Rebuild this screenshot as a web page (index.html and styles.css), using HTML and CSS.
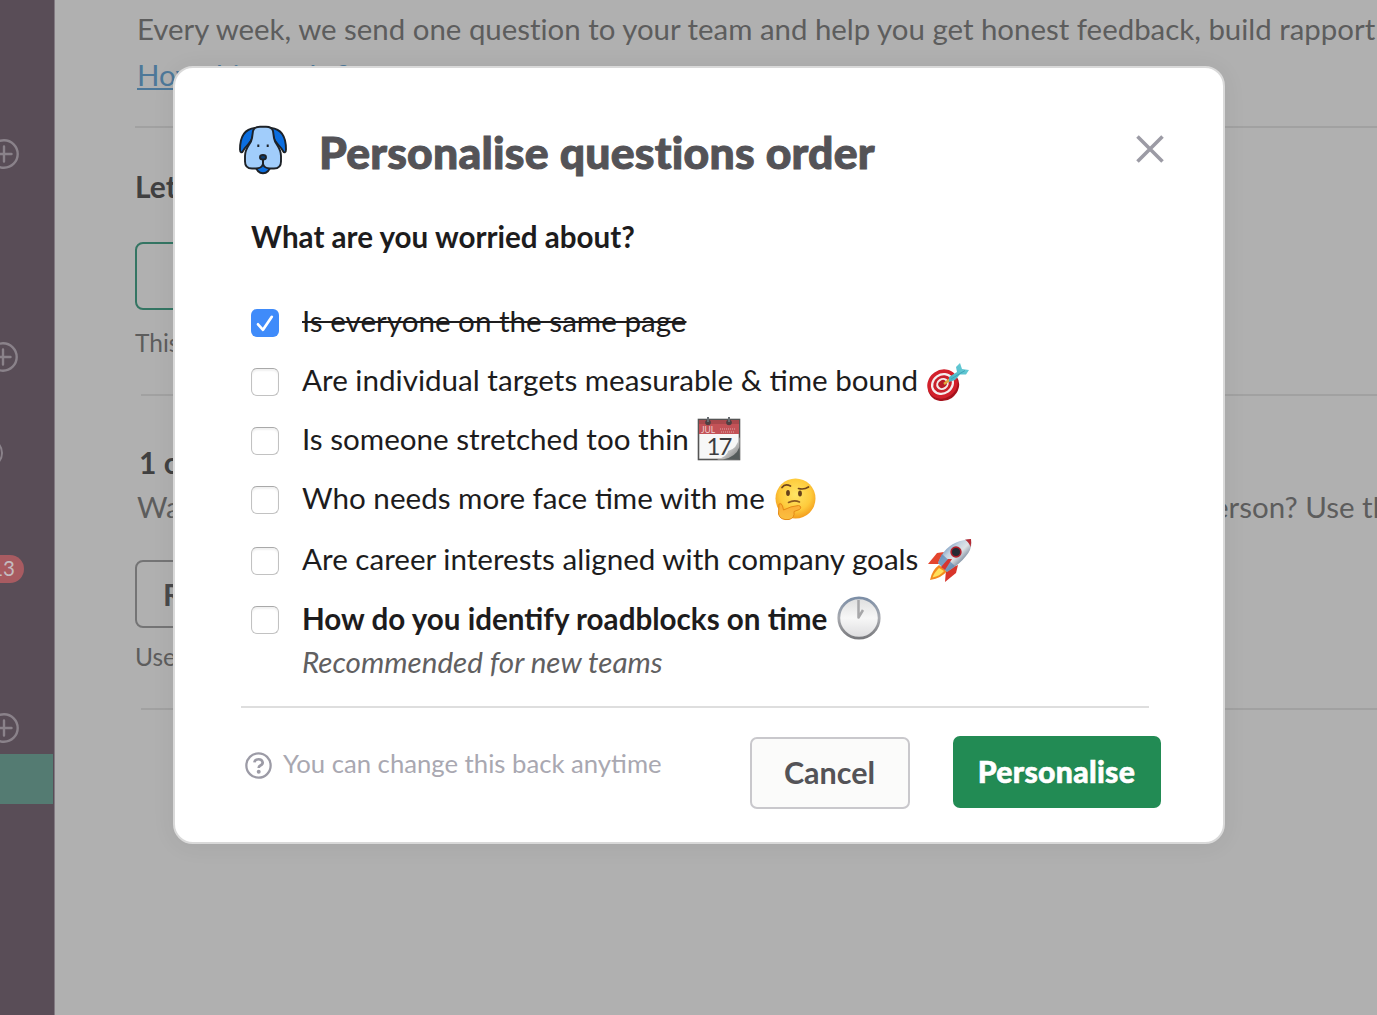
FILE: index.html
```html
<!DOCTYPE html>
<html lang="en">
<head>
<meta charset="utf-8">
<title>Personalise questions order</title>
<link rel="stylesheet" href="styles.css">
</head>
<body>
<svg width="0" height="0" class="defs" aria-hidden="true">
  <defs>
    <symbol id="plus" viewBox="0 0 30 30"><circle cx="15" cy="15" r="13.7" fill="none" stroke="currentColor" stroke-width="2.4"/><path d="M15 7.5v15M7.5 15h15" stroke="currentColor" stroke-width="2.4" stroke-linecap="round"/></symbol>
    <linearGradient id="dart" x1="0" y1="1" x2="1" y2="0"><stop offset="0" stop-color="#43b3c6"/><stop offset="1" stop-color="#6fd0d8"/></linearGradient>
    <radialGradient id="face" cx=".5" cy=".4" r=".6"><stop offset="0" stop-color="#ffe565"/><stop offset=".65" stop-color="#fecb3c"/><stop offset="1" stop-color="#f39c1d"/></radialGradient>
    <linearGradient id="hand" x1="0" y1="0" x2="0" y2="1"><stop offset="0" stop-color="#fbab35"/><stop offset="1" stop-color="#fbc040"/></linearGradient>
    <linearGradient id="hull" x1=".2" y1=".2" x2=".8" y2=".8"><stop offset="0" stop-color="#6f93bb"/><stop offset=".3" stop-color="#c3d2e0"/><stop offset=".55" stop-color="#dfe3e6"/><stop offset="1" stop-color="#4a627d"/></linearGradient>
    <linearGradient id="rim" x1="0" y1="0" x2="0" y2="1"><stop offset="0" stop-color="#7c8ea6"/><stop offset=".5" stop-color="#a9abb0"/><stop offset="1" stop-color="#77787c"/></linearGradient>
    <linearGradient id="dial" x1="0" y1="0" x2="0" y2="1"><stop offset="0" stop-color="#dedede"/><stop offset=".5" stop-color="#f7f7f7"/><stop offset="1" stop-color="#dcdcde"/></linearGradient>
    <linearGradient id="curl" x1="0" y1="0" x2="1" y2="1"><stop offset="0" stop-color="#fafafa"/><stop offset=".55" stop-color="#c5c5c5"/><stop offset="1" stop-color="#777"/></linearGradient>
  </defs>
</svg>
<div class="app">
  <aside class="sidebar">
    <svg class="plus plus-a"><use href="#plus"/></svg>
    <svg class="plus plus-b"><use href="#plus"/></svg>
    <span class="ring"></span>
    <span class="count">13</span>
    <svg class="plus plus-c"><use href="#plus"/></svg>
    <span class="active"></span>
  </aside>
  <main class="page">
    <p class="lead">Every week, we send one question to your team and help you get honest feedback, build rapport</p>
    <a class="link">How this works?</a>
    <section class="block first">
      <h2>Let’s</h2>
      <div class="box green"></div>
      <p class="hint">This</p>
    </section>
    <section class="block second">
      <h2>1 on</h2>
      <p class="split"><span>Wan</span><span class="tail">person? Use this</span></p>
      <div class="box grey">R</div>
      <p class="hint">Use</p>
    </section>
    <div class="end"></div>
  </main>
</div>

<div class="modal" role="dialog">
  <header class="head">
    <svg class="dog" viewBox="0 0 50 50" stroke="#1d2228" stroke-width="1.9" stroke-linejoin="round">
      <path d="M16.800 39.500Q19 48.300 25 48.300T33.200 39.500Z" fill="#0b6ee0"/>
      <path d="M17 3C6 4 2 12 2 24.500C2 28 4 28 5 26C8 20 13.500 18 14.500 12Z" fill="#0b6ee0"/>
      <path d="M33 3C44 4 48 12 48 24.500C48 28 46 28 45 26C42 20 36.500 18 35.500 12Z" fill="#0b6ee0"/>
      <path d="M15 6Q16 1.700 22 1.700H28Q34 1.700 35 6L36 13C37 20 43 22 43 31V36.500Q43 43.500 36 43.500H32Q26.500 43.500 25 39Q23.500 43.500 18 43.500H14Q7 43.500 7 36.500V31C7 22 13 20 14 13Z" fill="#a1cdfb"/>
      <ellipse cx="25" cy="32.300" rx="3" ry="2.300" fill="#0b3e73"/><path d="M25 34.500V39.500M20.300 19.500v2.500M29.700 19.500v2.500" fill="none" stroke-width="2"/>
    </svg>
    <h1>Personalise questions order</h1>
    <svg class="close" viewBox="0 0 30 30"><path d="M2.500 2.500L27.500 27.500M27.500 2.500L2.500 27.500" stroke="#9c9ba5" stroke-width="3.600"/></svg>
  </header>
  <h3>What are you worried about?</h3>
  <ul class="list">
    <li><span class="check on"><svg viewBox="0 0 28 28"><path d="M7 15.300L12 20.800L20.800 7.800" fill="none" stroke="#fff" stroke-width="2.700" stroke-linecap="round" stroke-linejoin="round"/></svg></span><span class="label done">Is everyone on the same page</span></li>
    <li><span class="check"></span><span class="label">Are individual targets measurable &amp; time bound</span>
      <svg class="emoji target" viewBox="0 0 44 44"><ellipse cx="17.500" cy="26" rx="16.200" ry="14.500" fill="#a5121c" transform="rotate(-35 17.500 26)"/><g transform="rotate(-35 16.500 24)"><ellipse cx="16.500" cy="24" rx="15.800" ry="14" fill="#d2202b"/><ellipse cx="16.500" cy="24" rx="12" ry="10.500" fill="#f5eeee"/><ellipse cx="16.500" cy="24" rx="9.700" ry="8.300" fill="#c9202b"/><ellipse cx="16.500" cy="24" rx="6.600" ry="5.700" fill="#f3e9e9"/><ellipse cx="16.500" cy="24" rx="4.400" ry="3.800" fill="#b91c27"/></g><path d="M18 24L25 18.500" stroke="#e0ab3c" stroke-width="2.500"/><path d="M23 22L23 17L31 12L30 7L34 3L36 9L43 10L40 14.500L34 14.500L29 20Z" fill="url(#dart)"/><path d="M25 19L39 10.500" stroke="#3ea3b8" stroke-width="1"/></svg></li>
    <li><span class="check"></span><span class="label">Is someone stretched too thin</span>
      <svg class="emoji cal" viewBox="0 0 44 44"><rect x="1.500" y="2.500" width="41" height="40" fill="#f7f7f7" stroke="#555" stroke-width="1.600"/><path d="M2 3H42V17H2Z" fill="#c35257"/><path d="M2 3H42V7H2Z" fill="#a9484c"/><text x="4" y="15.500" font-size="8.500" fill="#efcdce">JUL</text><path d="M23 12h15M24 15h14" stroke="#d58b8e" stroke-width="1.300" stroke-dasharray="1 1"/><path d="M42.500 20V42.500H20Q31 39 31 34Q40 32 42.500 20Z" fill="url(#curl)"/><path d="M26 42.500Q39 40 42.500 30V42.500Z" fill="#555b5b"/><text x="9.500" y="37.500" font-size="24" letter-spacing="-2" fill="#3c3c3f">17</text><circle cx="11" cy="5.500" r="2.800" fill="#4d3f42"/><circle cx="32" cy="5.500" r="2.800" fill="#4d3f42"/><path d="M11 5V0M32 5V0" stroke="#686d72" stroke-width="2"/></svg></li>
    <li><span class="check"></span><span class="label">Who needs more face time with me</span>
      <svg class="emoji think" viewBox="0 0 44 44"><circle cx="22.500" cy="21.500" r="20" fill="url(#face)"/><path d="M9 10.500Q12 6 17.500 9M25.500 11.500Q31 13 35.500 10" fill="none" stroke="#70451c" stroke-width="1.700" stroke-linecap="round"/><ellipse cx="15" cy="16" rx="1.900" ry="2.900" fill="#65401b"/><ellipse cx="27" cy="16.500" rx="1.900" ry="2.900" fill="#65401b"/><path d="M15.500 25.500Q21 22.500 26.500 25" fill="none" stroke="#8c5a1f" stroke-width="1.600" stroke-linecap="round"/><path d="M6 27Q8.500 25.500 9.500 29L10.500 33Q18 29 25.500 28.500Q29.500 29.500 26.500 32.500L21 34.500Q22 41 16 42.500Q7 43.500 5.500 37Z" fill="url(#hand)" stroke="#e58a16" stroke-width="1"/></svg></li>
    <li><span class="check"></span><span class="label">Are career interests aligned with company goals</span>
      <svg class="emoji rocket" viewBox="0 0 44 44"><path d="M16 13L9 14L0 25L12 25Z" fill="#e4452e"/><path d="M30 26L28 34L17 43L18 31Z" fill="#d8352b"/><path d="M11 26Q4 31 2 41Q14 39 19 32Z" fill="#f28b1e"/><path d="M11 29Q6 34 4.500 38.500Q12 37 16 32Z" fill="#ffe05a"/><path d="M10 24Q16 7 32 2Q39 0 43 0Q45 9 38 17Q32 25 19 33Z" fill="url(#hull)"/><path d="M37 .7Q40 0 43 0Q43.600 3.500 42.500 8Q41 3 37 .7Z" fill="#b52b34"/><path d="M10 24L14 15L27 27L19 33Z" fill="#5684b4" opacity=".7"/><path d="M13 28L20 20L24 20L17 31Z" fill="#d63531"/><circle cx="28" cy="13" r="5.700" fill="#b0202b"/><circle cx="28" cy="13" r="4" fill="#252b34"/></svg></li>
    <li><span class="check"></span><span class="label strong">How do you identify roadblocks on time</span>
      <svg class="emoji clock" viewBox="0 0 44 44"><circle cx="22" cy="22" r="20.200" fill="url(#dial)" stroke="url(#rim)" stroke-width="2.800"/><path d="M21.500 4V21.500L26 14" fill="none" stroke="#a7a7a9" stroke-width="2.500" stroke-linejoin="round"/></svg></li>
  </ul>
  <p class="note">Recommended for new teams</p>
  <footer class="foot">
    <svg class="help" viewBox="0 0 26 26"><circle cx="13" cy="13" r="11.700" fill="none" stroke="#9c9ba6" stroke-width="2.200"/><path d="M9 10Q9.500 7 13 7T17 10Q17 12 14.800 13Q13.200 13.800 13.200 15.500" fill="none" stroke="#9c9ba6" stroke-width="2.600"/><circle cx="13.200" cy="19" r="1.900" fill="#9c9ba6"/></svg>
    <span class="back">You can change this back anytime</span>
    <button class="btn cancel">Cancel</button>
    <button class="btn go">Personalise</button>
  </footer>
</div>
</body>
</html>
```
FILE: styles.css
```css
* { box-sizing: border-box; }
body { margin: 0; width: 1377px; height: 1015px; overflow: hidden; position: relative; font-family: Lato, "Liberation Sans", sans-serif; background: #b0b0b0; }
h1, h2, h3, p, ul { margin: 0; padding: 0; }
svg { display: block; flex: none; }
.defs { position: absolute; }

.app { display: flex; height: 1015px; }
.sidebar { width: 55px; flex: none; background: #594d57; border-right: 1px solid #827a82; overflow: hidden; display: flex; flex-direction: column; align-items: flex-start; }
.sidebar > * { flex: none; }
.plus { width: 30px; height: 30px; color: #8a828a; }
.plus-a { margin: 139px 0 0 -11px; }
.plus-b { margin: 173px 0 0 -12px; }
.ring { width: 30px; height: 30px; margin: 66px 0 0 -27px; border: 2px solid #8a828a; border-radius: 50%; }
.count { width: 44px; height: 28px; margin: 87px 0 0 -20px; padding-right: 9px; border-radius: 14px; background: #a85b61; color: #c4bcc0; font-size: 20.500px; line-height: 27px; text-align: right; }
.plus-c { margin: 130px 0 0 -11px; }
.active { width: 53px; height: 50px; margin-top: 11px; background: #547b72; }

.page { flex: 1; min-width: 0; overflow: hidden; padding: 6px 0 0 80px; color: #5d5d5d; white-space: nowrap; }
.lead { padding-left: 2px; font-size: 29.420px; line-height: 46px; font-variant-ligatures: no-common-ligatures; }
.link { display: block; width: max-content; height: 32px; margin: 6px 0 0 2px; font-size: 29.420px; line-height: 33px; color: #4d7899; border-bottom: 2px solid #4d7899; }
.first { margin-top: 36px; border-top: 2px solid #a1a1a1; height: 268px; }
.block h2 { color: #404041; font-size: 30px; line-height: 40px; font-weight: 700; }
.first h2 { padding-top: 38px; }
.box { width: 400px; height: 68px; border-radius: 8px; }
.green { margin-top: 36px; border: 2px solid #347563; }
.hint { font-size: 24.500px; line-height: 30px; margin-top: 18px; }
.second { margin-left: 6px; border-top: 2px solid #a1a1a1; height: 314px; padding-top: 46px; }
.second h2, .split, .second .box, .second .hint { margin-left: -6px; }
.second h2 { padding-left: 4px; }
.split { display: flex; font-size: 29.500px; line-height: 46px; padding-left: 2px; margin-top: 2px; }
.tail { margin-left: auto; margin-right: -32px; }
.grey { margin-top: 30px; border: 2px solid #747475; padding-left: 26px; font-size: 30px; line-height: 64px; font-weight: 700; color: #49494b; }
.second .hint { margin-top: 14px; }
.end { margin-left: 6px; border-top: 2px solid #a1a1a1; }

.modal { position: absolute; left: 173px; top: 66px; width: 1052px; height: 778px; background: #fff; border: 2px solid #d9d9d9; border-radius: 20px; box-shadow: 0 2px 24px rgba(0, 0, 0, .06); color: #1d1c1d; white-space: nowrap; }
.head { display: flex; align-items: flex-start; padding: 57px 58px 0 63px; height: 149px; }
.dog { width: 50px; height: 50px; }
.head h1 { margin: 0 auto 0 31px; font-size: 44.500px; line-height: 54px; font-weight: 900; color: #545357; letter-spacing: .23px; -webkit-text-stroke: 1px #545357; }
.close { width: 30px; height: 30px; margin-top: 9px; }
.modal h3 { padding-left: 76px; font-size: 29.600px; line-height: 40px; font-weight: 700; }
.list { list-style: none; padding: 36px 0 0 75.500px; }
.list li { display: flex; align-items: center; height: 59px; }
.list li:nth-child(4) { height: 60px; padding-bottom: 1px; }
.list li:nth-child(5) { height: 60px; padding-top: 1px; }
.check { flex: none; width: 28px; height: 28px; border: 1.500px solid #c2c2c2; border-top-color: #a9a9a9; border-radius: 6px; box-shadow: inset 0 2px 2px rgba(0, 0, 0, .06); }
.check.on { border: 0; background: #3f8bfa; box-shadow: none; }
.label { margin: -3px 0 0 23.500px; font-size: 29.600px; line-height: 40px; }
.done { text-decoration: line-through; text-decoration-thickness: 2px; }
.strong { font-weight: 700; margin-top: -2px; }
.emoji { width: 44px; height: 44px; margin-left: 8px; }
.cal { margin-top: -3px; }
.think { margin: -1px 0 0 8px; }
.rocket { margin-left: 10px; }
.clock { margin: -4px 0 0 10px; }
.note { padding-left: 127px; margin-top: -7px; font-size: 29.600px; line-height: 40px; font-style: italic; color: #616061; }
.foot { display: flex; align-items: flex-start; margin: 24px 74px 0 66px; border-top: 2px solid #dedede; height: 110px; }
.help { width: 27px; height: 27px; margin: 44px 0 0 4px; }
.back { margin: 38px auto 0 11px; font-size: 25.700px; line-height: 34px; color: #a9a8b1; }
.btn { flex: none; font-family: inherit; padding: 0; height: 72px; border-radius: 7px; font-size: 30px; }
.cancel { width: 160px; margin-top: 29px; padding: 0 1px 2px 0; border: 2px solid #c9c8cc; background: #fbfbfa; color: #545357; font-size: 30.500px; font-weight: 700; }
.go { width: 208px; margin: 28px -12px 0 43px; padding: 0 1px 2px 0; border: 0; background: #228b54; color: #fff; font-size: 30.200px; font-weight: 900; letter-spacing: .3px; -webkit-text-stroke: .6px #fff; text-shadow: 0 1px 1px rgba(0, 0, 0, .15); }
```
